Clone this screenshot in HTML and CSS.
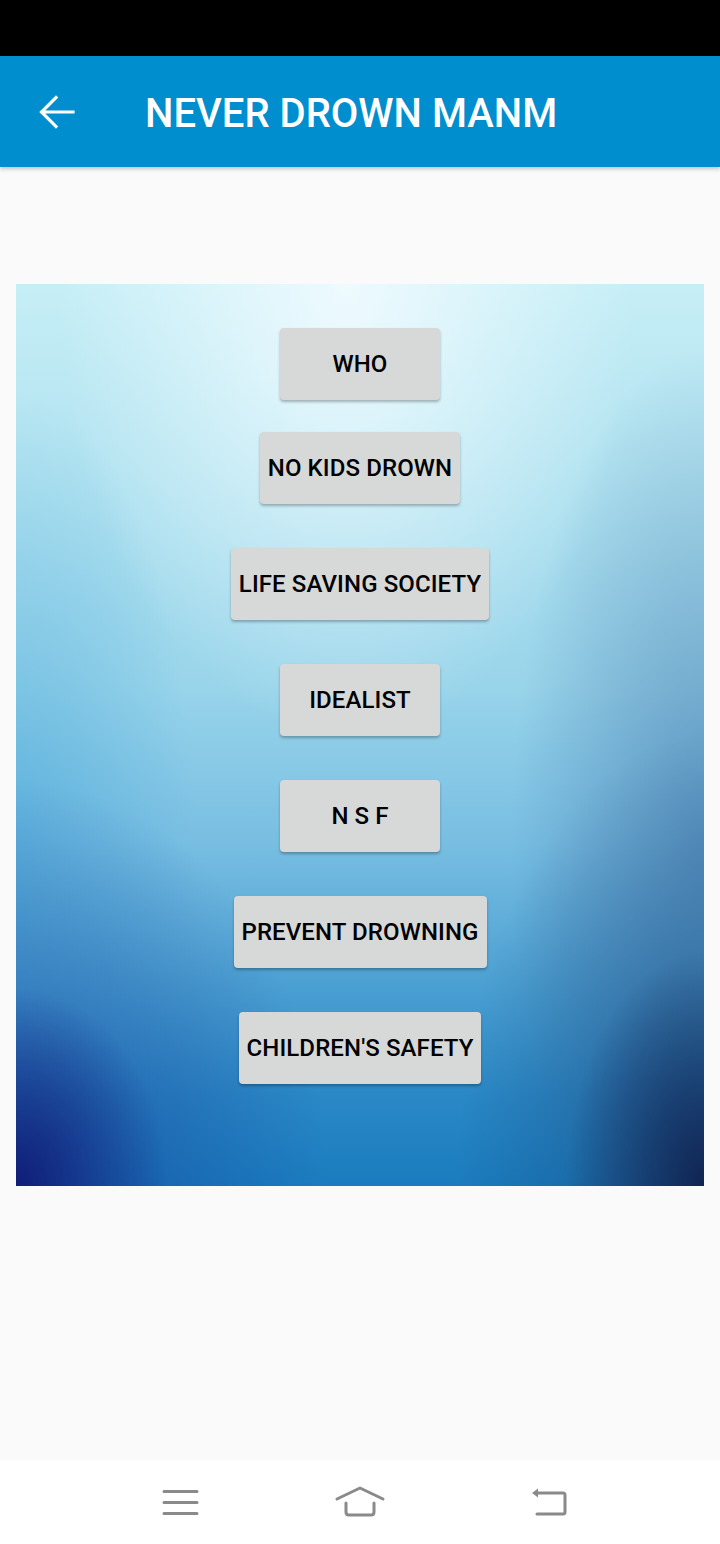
FILE: index.html
```html
<!DOCTYPE html>
<html>
<head>
<meta charset="utf-8">
<link rel="stylesheet" href="styles.css">
</head>
<body>
<div class="screen">
  <div class="status-bar"></div>
  <header class="app-bar">
    <svg class="back" width="48" height="48" viewBox="0 0 48 48">
      <path d="M41 24H10M24 9.5L9.5 24L24 38.5" fill="none" stroke="#fff" stroke-width="3.2" stroke-linecap="square"/>
    </svg>
    <h1 class="title">NEVER DROWN MANM</h1>
  </header>
  <main class="content">
    <section class="panel">
      <button class="btn first">WHO</button>
      <button class="btn">NO KIDS DROWN</button>
      <button class="btn">LIFE SAVING SOCIETY</button>
      <button class="btn">IDEALIST</button>
      <button class="btn">N S F</button>
      <button class="btn">PREVENT DROWNING</button>
      <button class="btn">CHILDREN'S SAFETY</button>
    </section>
  </main>
  <nav class="nav-bar">
    <svg class="nav-icon menu" width="40" height="32" viewBox="0 0 40 32">
      <path d="M4 5.5H37M4 16.5H37M4 27.5H37" stroke="#8a8a8a" stroke-width="3" stroke-linecap="round" fill="none"/>
    </svg>
    <svg class="nav-icon home" width="52" height="34" viewBox="0 0 52 34">
      <path d="M3 14L26 3L49 14" stroke="#8a8a8a" stroke-width="3" stroke-linecap="round" stroke-linejoin="round" fill="none"/>
      <path d="M12 18V27Q12 30 15 30H37Q40 30 40 27V18" stroke="#8a8a8a" stroke-width="3" stroke-linecap="round" fill="none"/>
    </svg>
    <svg class="nav-icon back-nav" width="40" height="32" viewBox="0 0 40 32">
      <path d="M9 7H34Q36 7 36 9V26Q36 28 34 28H8" stroke="#8a8a8a" stroke-width="3" stroke-linecap="round" fill="none"/>
      <path d="M3 7L9 2.5V11.5Z" fill="#8a8a8a"/>
    </svg>
  </nav>
</div>
</body>
</html>
```
FILE: styles.css
```css
* { box-sizing: border-box; }
html, body { margin: 0; padding: 0; }
body {
  width: 720px;
  height: 1544px;
  background: #fafafa;
  font-family: Roboto, "Noto Sans", "Liberation Sans", sans-serif;
}
.screen {
  display: flex;
  flex-direction: column;
  height: 1544px;
}
.status-bar {
  height: 56px;
  background: #000;
  flex: none;
}
.app-bar {
  height: 111px;
  flex: none;
  background: #008ece;
  display: flex;
  align-items: center;
  box-shadow: 0 2px 4px rgba(0,0,0,0.22);
  position: relative;
  z-index: 2;
}
.back {
  margin-left: 32px;
  flex: none;
}
.title {
  margin: 5px 0 0 65px;
  color: #fff;
  font-size: 40px;
  font-weight: 500;
  letter-spacing: 0;
  line-height: 1;
}
.content {
  flex: 1;
  padding: 117px 16px 0;
}
.panel {
  height: 902px;
  display: flex;
  flex-direction: column;
  align-items: center;
  padding-top: 44px;
  background:
    radial-gradient(ellipse 22% 22% at 0% 100%, rgba(16,26,118,0.95), rgba(16,26,118,0) 100%),
    radial-gradient(ellipse 45% 45% at 0% 100%, rgba(22,60,150,0.6), rgba(22,60,150,0) 100%),
    radial-gradient(ellipse 20% 26% at 100% 100%, rgba(16,34,80,0.95), rgba(16,34,80,0) 100%),
    radial-gradient(ellipse 36% 50% at 100% 100%, rgba(24,60,110,0.55), rgba(24,60,110,0) 100%),
    radial-gradient(ellipse 42% 50% at 48% 0%, rgba(240,251,255,0.95), rgba(240,251,255,0) 100%),
    radial-gradient(ellipse 28% 55% at 100% 62%, rgba(60,110,165,0.55), rgba(60,110,165,0) 100%),
    radial-gradient(ellipse 26% 50% at 0% 62%, rgba(60,160,215,0.45), rgba(60,160,215,0) 100%),
    linear-gradient(180deg, #c6eef6 0%, #b0e2f0 22%, #98d4ea 45%, #78bee2 62%, #4a9fd2 78%, #2a88c6 90%, #1a7cbe 100%);
}
.btn {
  height: 72px;
  min-width: 160px;
  padding: 0 8px;
  margin-bottom: 44px;
  border: none;
  border-radius: 4px;
  background: #d7d8d8;
  color: #000;
  font-family: Roboto, "Noto Sans", "Liberation Sans", sans-serif;
  font-size: 24px;
  font-weight: 500;
  letter-spacing: 0.1px;
  box-shadow: 0 2px 3px rgba(0,0,0,0.28);
}
.btn.first { margin-bottom: 32px; }
.nav-bar {
  height: 84px;
  flex: none;
  background: #fff;
  display: flex;
  align-items: center;
  padding-left: 160px;
}
.nav-icon { flex: none; }
.home { margin-left: 134px; }
.back-nav { margin-left: 143px; }
```
